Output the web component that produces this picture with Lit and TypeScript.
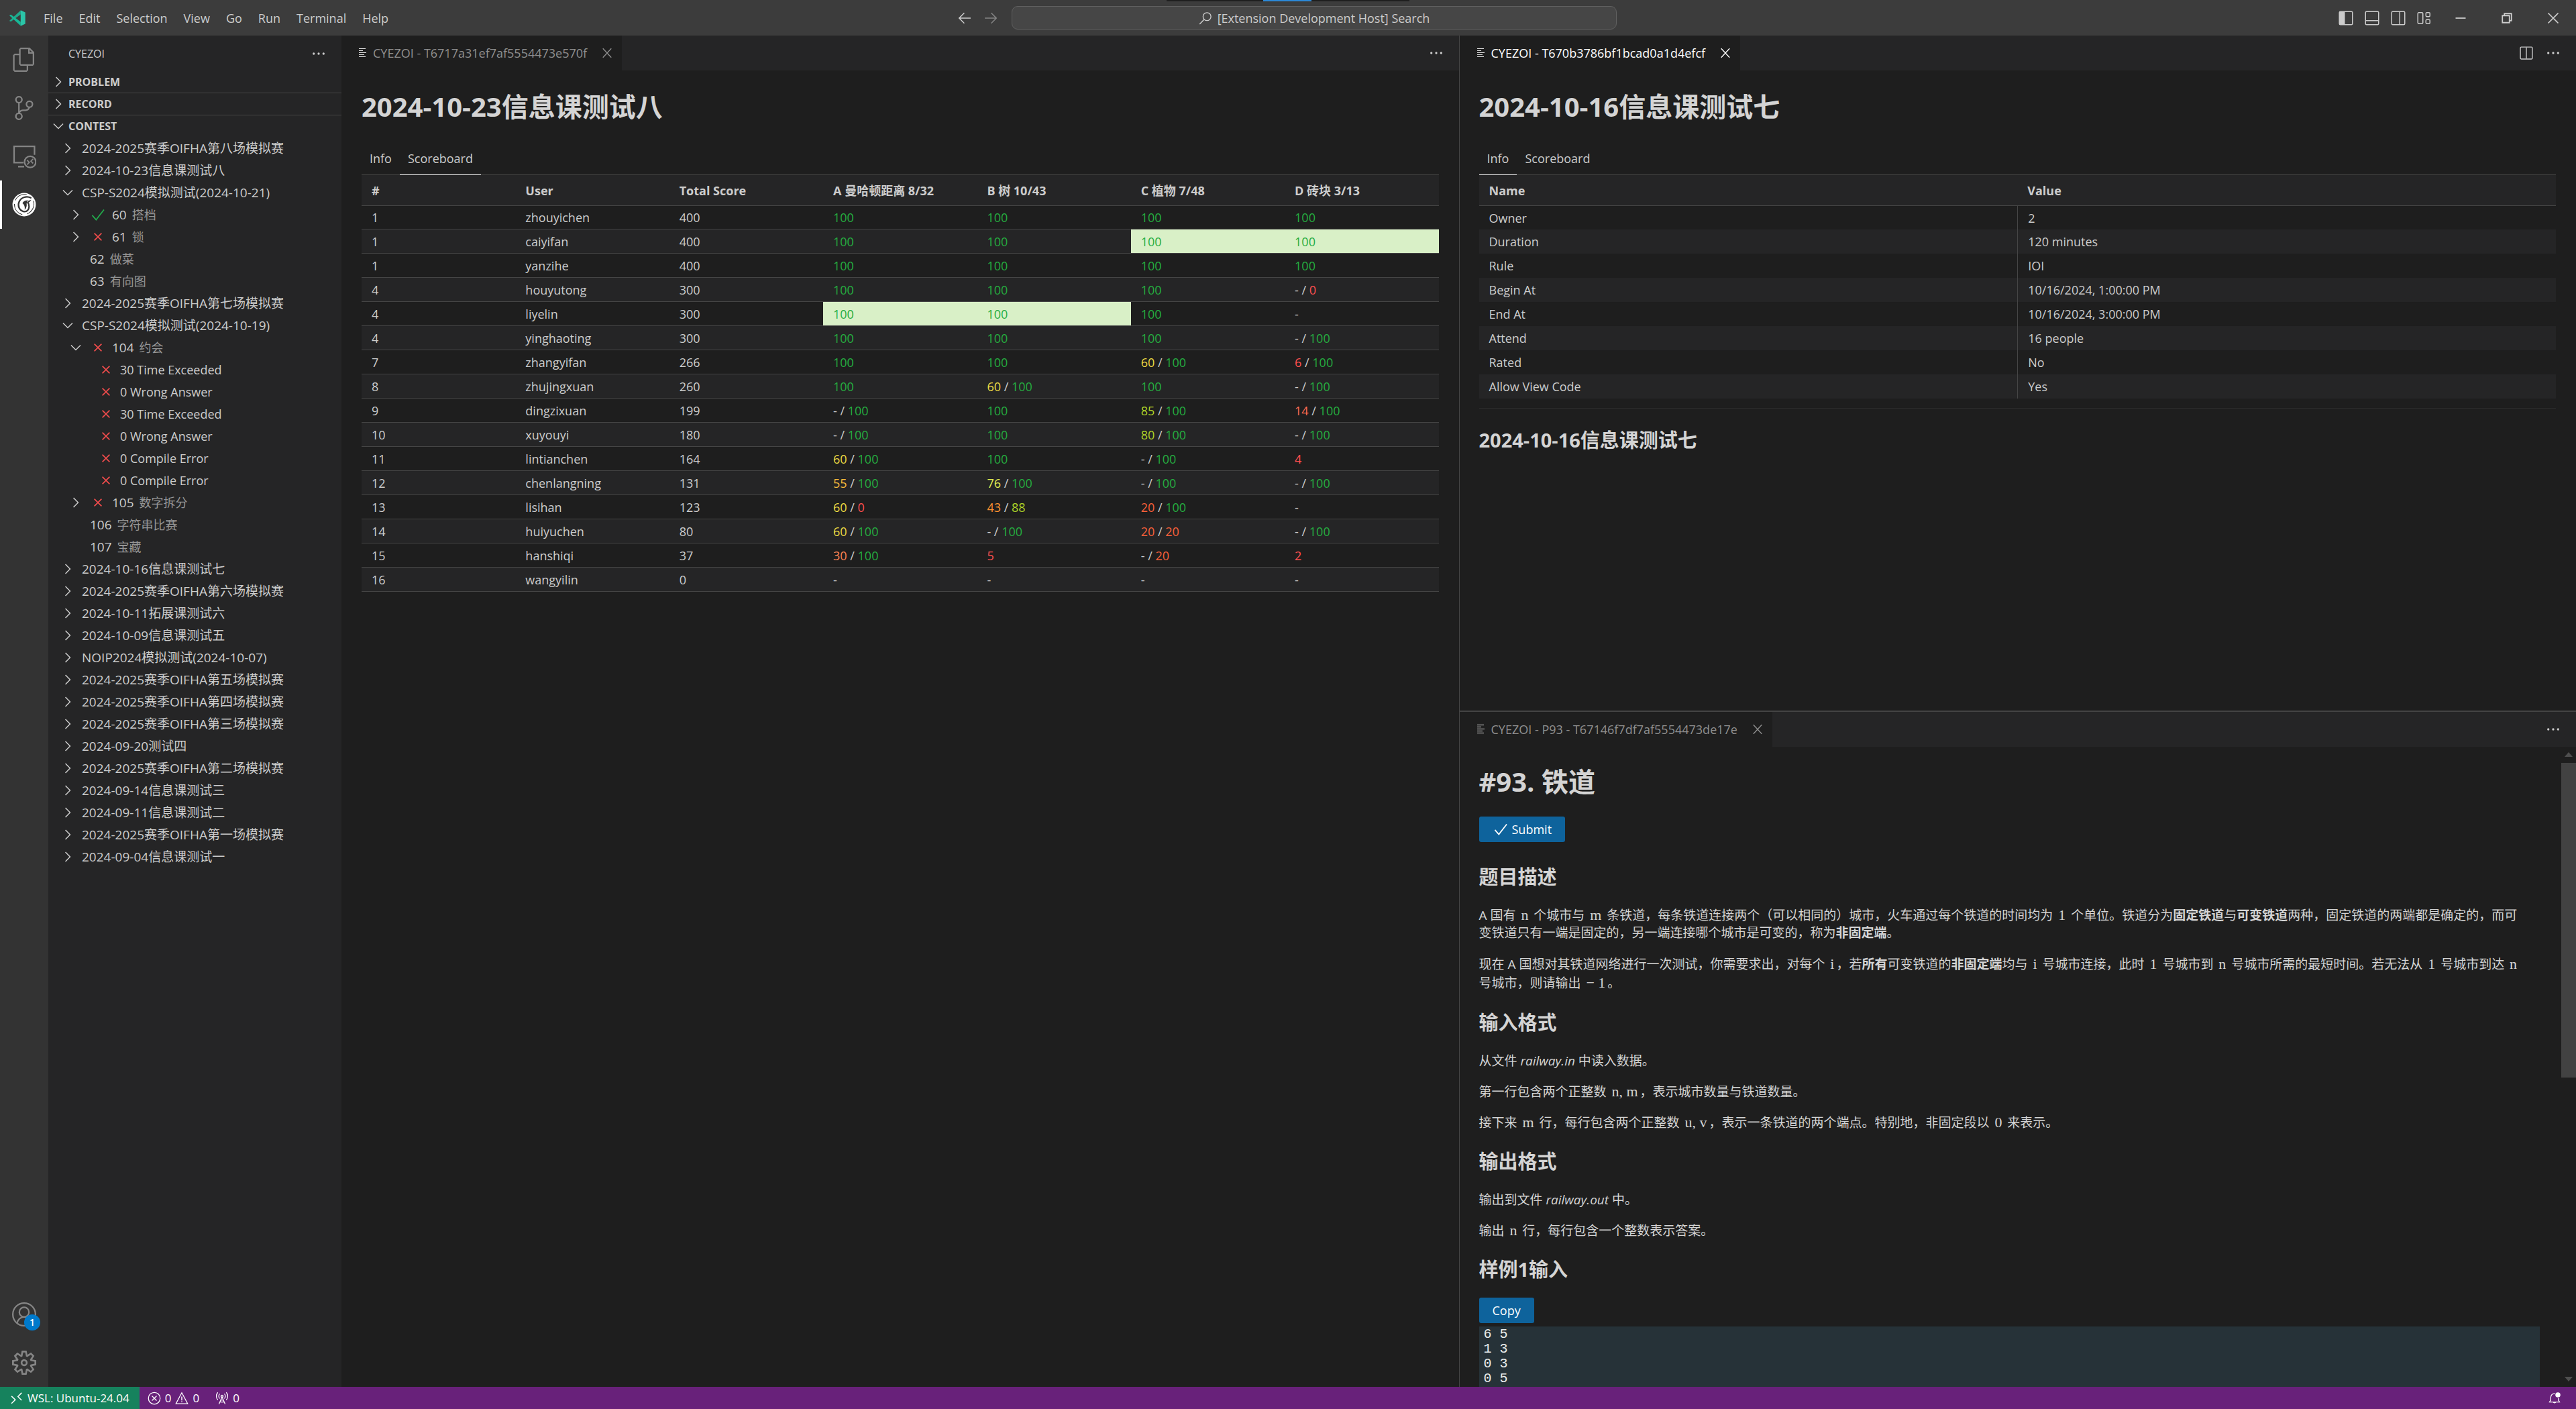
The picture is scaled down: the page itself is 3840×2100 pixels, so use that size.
import { LitElement, html, css, svg, nothing, type TemplateResult } from "lit";
import { customElement, state } from "lit/decorators.js";
import { classMap } from "lit/directives/class-map.js";

/* ---------- icons ---------- */

const icon = (body: unknown, box = 16, cls = "") =>
  html`<svg class="icon ${cls}" viewBox="0 0 ${box} ${box}" aria-hidden="true">${body}</svg>`;

const line = (d: string, w = 1) =>
  svg`<path d=${d} fill="none" stroke="currentColor" stroke-width=${w} />`;

const icons = {
  right: () => icon(line("M5.7 3.3 10.3 8l-4.6 4.7")),
  down: () => icon(line("M3.3 5.7 8 10.3l4.7-4.6")),
  check: () => icon(line("M2.3 8.6 6.2 13 14 3", 1.2)),
  cross: () => icon(line("M4.4 4.4l7.2 7.2M11.6 4.4l-7.2 7.2", 1.1)),
  close: () => icon(line("M3 2.6l10 10.8M13 2.6 3 13.4", 1.1)),
  more: () =>
    icon(svg`<g fill="currentColor"><circle cx="2.7" cy="8" r="1.2"/><circle cx="8" cy="8" r="1.2"/><circle cx="13.3" cy="8" r="1.2"/></g>`),
  page: () =>
    icon(svg`<path shape-rendering="crispEdges" d="M2 1.500h10M2 4.500h6M2 7.500h11M2 10.500h8M2 13.500h10" fill="none" stroke="currentColor" stroke-width="1"/>`),
  back: () => icon(line("M14.5 8H2.4M7.6 2.4 2 8l5.6 5.6", 1.1)),
  forward: () => icon(line("M1.5 8h12.1M8.4 2.4 14 8l-5.6 5.6", 1.1)),
  search: () =>
    icon(svg`<circle cx="9.8" cy="6.2" r="4.7" fill="none" stroke="currentColor" stroke-width="1.1"/>${line("M6.4 9.6 1 15.2", 1.2)}`),
  sideLeft: () =>
    icon(svg`<rect x="1.5" y="1.5" width="13" height="13" rx="1" fill="none" stroke="currentColor"/><path d="M2 2h5v12H2z" fill="currentColor"/>`),
  panel: () =>
    icon(svg`<rect x="1.5" y="1.5" width="13" height="13" rx="1" fill="none" stroke="currentColor"/>${line("M2 10.5h12")}`),
  sideRight: () =>
    icon(svg`<rect x="1.5" y="1.5" width="13" height="13" rx="1" fill="none" stroke="currentColor"/>${line("M9.5 2v12")}`),
  layout: () =>
    icon(svg`<g fill="none" stroke="currentColor"><rect x="1.5" y="2.5" width="5" height="11" rx="1"/><rect x="9.5" y="2.5" width="4" height="4" rx="1"/><rect x="9.5" y="9.5" width="4" height="4" rx="1"/></g>`),
  split: () =>
    icon(svg`<rect x="1.5" y="1.5" width="13" height="13" rx="1" fill="none" stroke="currentColor"/>${line("M8 2v12")}`),
  minimize: () => icon(line("M3 8h10", 1.2)),
  restore: () => icon(line("M3.5 5.5h7v7h-7zM5.5 5.5v-2h7v7h-2", 1.2)),
  winClose: () => icon(line("M3 3l10 10M13 3 3 13", 1.1)),
  files: () =>
    icon(svg`<path fill="currentColor" d="M17.5 0h-9L7 1.5V6H2.5L1 7.5v15.07L2.5 24h12.07L16 22.57V18h4.7l1.3-1.43V4.5L17.5 0zm0 2.12l2.38 2.38H17.5V2.12zm-3 20.38h-12v-15H7v9.07L8.5 18h6v4.5zm6-6h-12v-15H16V6h4.5v10.5z"/>`, 24, "big"),
  branch: () =>
    icon(svg`<path fill="currentColor" d="M21.007 8.222A3.738 3.738 0 0 0 15.045 5.2a3.737 3.737 0 0 0 1.156 6.583 2.988 2.988 0 0 1-2.668 1.67h-2.99a4.456 4.456 0 0 0-2.989 1.165V7.4a3.737 3.737 0 1 0-1.494 0v9.117a3.776 3.776 0 1 0 1.816.099 2.99 2.99 0 0 1 2.668-1.667h2.99a4.484 4.484 0 0 0 4.223-3.039 3.736 3.736 0 0 0 3.25-3.687zM4.565 3.738a2.242 2.242 0 1 1 4.484 0 2.242 2.242 0 0 1-4.484 0zm4.484 16.441a2.242 2.242 0 1 1-4.484 0 2.242 2.242 0 0 1 4.484 0zm8.221-9.715a2.242 2.242 0 1 1 0-4.485 2.242 2.242 0 0 1 0 4.485z"/>`, 24, "big"),
  remote: () =>
    icon(svg`${line("M11.500 18.200H2V2h20.300v8.500M6 22.200h6", 1.5)}<circle cx="18" cy="17.500" r="5.600" fill="none" stroke="currentColor" stroke-width="1.500"/>${line("M14.900 15.800l2.200 2.200-2.200 2.200M20.900 14.600l-2.200 2.200 2.200 2.200", 1.2)}`, 24, "big"),
  swirl: () =>
    icon(svg`<circle cx="12" cy="12" r="11.600" fill="currentColor"/><g fill="none" stroke="#333" stroke-linecap="round"><path stroke-width="1.500" d="M18.600 5.200C14.400 2.900 9 4.700 7 9.200c-1.700 4 .1 8.400 4.200 9.500 3.300.8 5.600-1.500 5.700-4.600.1-1.600-.3-2.900-1.100-3.900"/><path stroke-width=".700" d="M3.200 7.500C5.400 3.300 9.600 1.400 14.300 2M2.300 11.500c.1 5 3 8.900 7.600 10.300M21.400 8.500c1.300 5.200-1.200 10.300-6.200 12.600"/></g><path fill="#333" d="M10.300 10.700c.8-2.400 3.500-3.500 5.800-2.600l3.100-.9-1.800 2.100-3 1.500c.5 2.200-.1 4.700-1.900 6.300.4-2.500-.1-5-2.200-6.400z"/><circle cx="15.600" cy="9.100" r=".500" fill="currentColor"/>`, 24, "big"),
  account: () =>
    icon(svg`<g fill="none" stroke="currentColor"><circle cx="8" cy="8" r="7.500"/><circle cx="8" cy="6.500" r="3.200"/><path d="M3.400 13.700c.4-2.300 2.200-4 4.600-4s4.200 1.700 4.600 4"/></g>`, 16, "big"),
  gear: () =>
    icon(svg`<path fill="currentColor" d="M19.85 8.75l4.15.83v4.84l-4.15.83 2.35 3.52-3.43 3.43-3.52-2.35-.83 4.15H9.58l-.83-4.15-3.52 2.35-3.43-3.43 2.35-3.52L0 14.42V9.58l4.15-.83L1.8 5.23 5.23 1.8l3.52 2.35L9.58 0h4.84l.83 4.15 3.52-2.35 3.43 3.43-2.35 3.52zm-1.57 5.07l4-.81v-2l-4-.81-.54-1.3 2.29-3.43-1.43-1.43-3.43 2.29-1.3-.54-.81-4h-2l-.81 4-1.3.54-3.43-2.29-1.43 1.43L6.38 8.9l-.54 1.3-4 .81v2l4 .81.54 1.3-2.29 3.43 1.43 1.43 3.43-2.29 1.3.54.81 4h2l.81-4 1.3-.54 3.43 2.29 1.43-1.43-2.29-3.43.54-1.3zm-8.186-4.672A3.43 3.43 0 0 1 12 8.57 3.44 3.44 0 0 1 15.43 12a3.43 3.43 0 1 1-5.336-2.852zm.956 4.274c.281.188.612.288.95.288A1.7 1.7 0 0 0 13.71 12a1.71 1.71 0 1 0-2.66 1.422z"/>`, 24, "big"),
  wsl: () => icon(line("M1.700 5.500 6.200 9.800l-4.500 4.400M13.800 1.500 9.400 6l4.400 4.400", 1.2)),
  error: () =>
    icon(svg`<circle cx="8" cy="8" r="7" fill="none" stroke="currentColor"/>${line("M5.200 5.200l5.600 5.600M10.800 5.200l-5.600 5.600")}`),
  warning: () =>
    icon(svg`${line("M8 1.400 1 14.500h14z")}${line("M8 6v4.500M8 11.500v1.300", 1.2)}`),
  tower: () =>
    icon(svg`${line("M4.300 15 8 6.500 11.700 15M5.400 12.500h5.200M6.500 10h3")}<circle cx="8" cy="5.500" r="1.300" fill="none" stroke="currentColor"/>${line("M5.300 8.300a3.800 3.800 0 0 1 0-5.600M10.700 8.300a3.800 3.800 0 0 0 0-5.600M3 10a6.600 6.600 0 0 1 0-9M13 10a6.600 6.600 0 0 0 0-9")}`),
  bell: () =>
    icon(svg`${line("M8.500 2.500C5.500 2 3.500 4.300 3.500 7v3L2 12.500h12L12.500 10V8M6.500 12.500a1.600 1.600 0 0 0 3 0")}<circle cx="12" cy="4" r="3" fill="currentColor"/>`),
  logo: () => html`<svg class="logo" viewBox="0 0 24 24" aria-hidden="true">
    <path d="M0.400 15.600 16.800 0.600v5.900L2.200 17.300 0.400 16.600z" fill="#1fa88c" />
    <path d="M0.400 8.400 16.800 23.400v-5.900L2.200 6.700 0.400 7.400z" fill="#17b897" />
    <path d="M16.800 0.300 23.700 3.400v17.200l-6.900 3.100z" fill="#2bc5a8" />
  </svg>`,
};

/* ---------- data ---------- */

interface Node {
  level: 1 | 2 | 3;
  label: string;
  note?: string;
  open?: boolean;
  leaf?: boolean;
  mark?: "ok" | "bad";
}

const top = (label: string, open = false): Node => ({ level: 1, label, open });
const verdict = (label: string): Node => ({ level: 3, label, leaf: true, mark: "bad" });

const tree: Node[] = [
  top("2024-2025赛季OIFHA第八场模拟赛"),
  top("2024-10-23信息课测试八"),
  top("CSP-S2024模拟测试(2024-10-21)", true),
  { level: 2, label: "60", note: "搭档", mark: "ok" },
  { level: 2, label: "61", note: "锁", mark: "bad" },
  { level: 2, label: "62", note: "做菜", leaf: true },
  { level: 2, label: "63", note: "有向图", leaf: true },
  top("2024-2025赛季OIFHA第七场模拟赛"),
  top("CSP-S2024模拟测试(2024-10-19)", true),
  { level: 2, label: "104", note: "约会", mark: "bad", open: true },
  verdict("30 Time Exceeded"),
  verdict("0 Wrong Answer"),
  verdict("30 Time Exceeded"),
  verdict("0 Wrong Answer"),
  verdict("0 Compile Error"),
  verdict("0 Compile Error"),
  { level: 2, label: "105", note: "数字拆分", mark: "bad" },
  { level: 2, label: "106", note: "字符串比赛", leaf: true },
  { level: 2, label: "107", note: "宝藏", leaf: true },
  top("2024-10-16信息课测试七"),
  top("2024-2025赛季OIFHA第六场模拟赛"),
  top("2024-10-11拓展课测试六"),
  top("2024-10-09信息课测试五"),
  top("NOIP2024模拟测试(2024-10-07)"),
  top("2024-2025赛季OIFHA第五场模拟赛"),
  top("2024-2025赛季OIFHA第四场模拟赛"),
  top("2024-2025赛季OIFHA第三场模拟赛"),
  top("2024-09-20测试四"),
  top("2024-2025赛季OIFHA第二场模拟赛"),
  top("2024-09-14信息课测试三"),
  top("2024-09-11信息课测试二"),
  top("2024-2025赛季OIFHA第一场模拟赛"),
  top("2024-09-04信息课测试一"),
];

/* rank, user, total, then one cell per problem; a leading "*" marks the first accepted answer */
const board: string[][] = [
  ["1", "zhouyichen", "400", "100", "100", "100", "100"],
  ["1", "caiyifan", "400", "100", "100", "*100", "*100"],
  ["1", "yanzihe", "400", "100", "100", "100", "100"],
  ["4", "houyutong", "300", "100", "100", "100", "- / 0"],
  ["4", "liyelin", "300", "*100", "*100", "100", "-"],
  ["4", "yinghaoting", "300", "100", "100", "100", "- / 100"],
  ["7", "zhangyifan", "266", "100", "100", "60 / 100", "6 / 100"],
  ["8", "zhujingxuan", "260", "100", "60 / 100", "100", "- / 100"],
  ["9", "dingzixuan", "199", "- / 100", "100", "85 / 100", "14 / 100"],
  ["10", "xuyouyi", "180", "- / 100", "100", "80 / 100", "- / 100"],
  ["11", "lintianchen", "164", "60 / 100", "100", "- / 100", "4"],
  ["12", "chenlangning", "131", "55 / 100", "76 / 100", "- / 100", "- / 100"],
  ["13", "lisihan", "123", "60 / 0", "43 / 88", "20 / 100", "-"],
  ["14", "huiyuchen", "80", "60 / 100", "- / 100", "20 / 20", "- / 100"],
  ["15", "hanshiqi", "37", "30 / 100", "5", "- / 20", "2"],
  ["16", "wangyilin", "0", "-", "-", "-", "-"],
];

const details: [string, string][] = [
  ["Owner", "2"],
  ["Duration", "120 minutes"],
  ["Rule", "IOI"],
  ["Begin At", "10/16/2024, 1:00:00 PM"],
  ["End At", "10/16/2024, 3:00:00 PM"],
  ["Attend", "16 people"],
  ["Rated", "No"],
  ["Allow View Code", "Yes"],
];

const scoreText = (value: string) =>
  value
    .replace("*", "")
    .split(" / ")
    .map((part, i) => {
      const shown = part === "-" ? "-" : html`<span class="s${Math.floor(Number(part) / 10)}">${part}</span>`;
      return i ? html` / ${shown}` : shown;
    });

const m = (text: string) => html`<span class="math">${text}</span>`;

@customElement("app-root")
export class AppRoot extends LitElement {
  @state() private sections = { PROBLEM: false, RECORD: false, CONTEST: true };

  static styles = css`
    :host {
      display: grid;
      grid-template-rows: 53px minmax(0, 1fr) 33px;
      height: 100vh;
      overflow: hidden;
      background: #1e1e1e;
      color: #cccccc;
      font: 18px/26px "Open Sans", "Noto Sans CJK SC", sans-serif;
    }
    * { box-sizing: border-box; }
    button {
      display: flex;
      align-items: center;
      margin: 0;
      padding: 0;
      border: 0;
      background: none;
      color: inherit;
      font: inherit;
      text-align: left;
      white-space: nowrap;
    }
    .icon { display: block; flex: none; width: 24px; height: 24px; }
    .icon.big { width: 36px; height: 36px; }

    /* title bar */
    .title {
      position: relative;
      display: grid;
      grid-template-columns: 1fr auto 1fr;
      align-items: center;
      background: #3c3c3c;
    }
    .menus { display: flex; align-items: center; padding-left: 14px; }
    .logo { width: 24px; height: 24px; margin-right: 15px; }
    .menus button { padding: 0 12px; }
    .centre { display: flex; align-items: center; padding-right: 12px; }
    .centre .nav { width: 39px; justify-content: center; }
    .nav .icon { width: 22px; height: 22px; }
    .nav.off { opacity: 0.5; }
    .command {
      justify-content: center;
      gap: 8px;
      width: 902px;
      height: 35px;
      margin-left: 12px;
      border: 1px solid #606060;
      border-radius: 9px;
      background: #464646;
    }
    .command .icon { width: 20px; height: 20px; }
    .window { display: flex; justify-content: flex-end; align-items: center; }
    .window .tool { width: 39px; justify-content: center; }
    .window .sys { width: 69px; justify-content: center; }
    .grip {
      position: absolute;
      top: 0;
      left: calc(50% - 181px);
      width: 362px;
      height: 2px;
      background: linear-gradient(90deg, #1f1f1f 0 144px, #2b88d8 144px 216px, #1f1f1f 216px);
    }

    /* body */
    .body { display: grid; grid-template-columns: 72px 437px minmax(0, 1fr) minmax(0, 1fr); min-height: 0; }
    .activity { display: flex; flex-direction: column; background: #333333; color: #858585; }
    .activity button { justify-content: center; height: 72px; border-left: 3px solid transparent; padding-right: 3px; }
    .activity .current { border-left-color: #ffffff; color: #ffffff; }
    .activity .low { margin-top: auto; }
    .badged { position: relative; }
    .badge {
      position: absolute;
      left: 33px;
      top: 36px;
      width: 24px;
      height: 24px;
      border-radius: 12px;
      background: #007acc;
      color: #ffffff;
      font-size: 14px;
      font-weight: 600;
      line-height: 24px;
      text-align: center;
    }

    .side { display: flex; flex-direction: column; background: #252526; min-width: 0; overflow: hidden; }
    .side-head { display: flex; align-items: center; justify-content: space-between; height: 53px; padding: 0 23px 0 30px; }
    .side-head h2 { margin: 0; font-size: 16px; font-weight: 400; line-height: 26px; }
    .more .icon { width: 22px; height: 22px; }
    .section { width: 100%; height: 33px; padding-left: 3px; gap: 3px; border-bottom: 1px solid #454545; font-size: 16px; font-weight: 700; }
    .section.open { height: 32px; border-bottom: 0; }
    .tree { margin: 0; padding: 0; list-style: none; }
    .node { width: 100%; height: 33px; padding-left: 17px; font-size: 19px; }
    .node.l2 { padding-left: 29px; }
    .node.l3 { padding-left: 41px; font-size: 18px; }
    .twist { width: 24px; margin-right: 9px; }
    .mark { margin-right: 9px; }
    .mark.ok { color: #23a94b; }
    .mark.bad { color: #f14c4c; }
    .note { margin-left: 8px; font-size: 18px; color: #969696; }

    /* editor groups */
    .group { display: flex; flex-direction: column; min-width: 0; min-height: 0; overflow: hidden; }
    .right { display: grid; grid-template-rows: calc(50% - 1px) minmax(0, 1fr); border-left: 1px solid #444444; min-height: 0; }
    .lower { border-top: 2px solid #444444; }
    .strip { display: flex; flex: none; align-items: center; height: 52px; background: #252526; }
    .file { display: flex; align-items: center; height: 52px; padding: 0 12px 0 24px; background: #1e1e1e; color: #8f8f8f; }
    .file.focus { color: #ffffff; }
    .file a { display: flex; align-items: center; gap: 7px; color: inherit; text-decoration: none; }
    .file a .icon { width: 16px; height: 16px; color: #e0e0e0; }
    .file .icon { width: 20px; height: 20px; }
    .file button { margin-left: 20px; }
    .actions { display: flex; gap: 18px; margin-left: auto; padding-right: 23px; }
    .actions .icon { width: 22px; height: 22px; }

    .page { flex: 1; min-width: 0; padding: 28px 30px 0; overflow: hidden; }
    .right .page { padding-left: 29px; }
    .scroller .page { padding-top: 26px; padding-right: 32px; }
    h1 { margin: 0 0 23px; font-size: 40px; line-height: 52px; color: #d4d4d4; }
    .scroller h1 { margin-bottom: 26px; }
    .page h2 { margin: 25px 0; font-size: 29px; line-height: 39px; color: #d4d4d4; }
    .tabs { display: flex; border-bottom: 1px solid #454545; }
    .tabs button { margin-bottom: -1px; padding: 15px 12px 11px; border-bottom: 1px solid transparent; }
    .tabs .on { border-bottom-color: #ffffff; }

    table { width: 100%; border-spacing: 0; table-layout: fixed; text-align: left; }
    th { height: 46px; padding: 0 15px; background: #252526; border-bottom: 1px solid #454545; font-weight: 700; white-space: nowrap; }
    td { height: 36px; padding: 0 15px; }
    tbody tr:first-child td { height: 35px; }
    tbody tr:nth-child(even) { background: #252526; }
    .board td { border-bottom: 1px solid #454545; }
    .board td.first { background: #d9f0c7; }
    .info td + td { border-left: 1px solid #454545; }
    .s0 { color: #ff4f4f; }
    .s1 { color: #ff694f; }
    .s2 { color: #f8603a; }
    .s3 { color: #fc8354; }
    .s4 { color: #fa9231; }
    .s5 { color: #f7bb3b; }
    .s6 { color: #ecdb44; }
    .s7 { color: #e2ec52; }
    .s8 { color: #b0d628; }
    .s10 { color: #25ad40; }
    hr { margin: 14px 0 27px; border: 0; border-top: 1px solid #2c2c2c; }

    .scroller { display: flex; flex: 1; min-height: 0; }
    .bar { display: flex; flex-direction: column; align-items: center; width: 22px; padding: 8px 0 8px; }
    .bar .thumb { width: 22px; height: 50%; margin: 9px 0 auto; background: #424242; }
    .bar i { width: 0; border: 6px solid transparent; border-top: 0; border-bottom: 7px solid #4f4f4f; }
    .bar i.dn { border-bottom: 0; border-top: 7px solid #4f4f4f; }
    .primary { height: 38px; padding: 0 20px; gap: 5px; border-radius: 3px; background: #0e639c; color: #ffffff; }
    .statement { font-size: 19px; color: #d4d4d4; }
    .statement p { margin: 0 0 20px; white-space: nowrap; }
    .statement p.tall { line-height: 28px; }
    .primary + .statement h2:first-child { margin-top: 32px; }
    .statement h2:last-child { margin-bottom: 23px; }
    .math { margin: 0 3px; font-family: "Liberation Serif", serif; font-size: 22px; line-height: 20px; }
    pre {
      margin: 5px 0 0;
      padding: 1px 7px;
      background: #263238;
      color: #e9eded;
      font: 20px/22px "Liberation Mono", monospace;
    }

    /* status bar */
    .status { display: flex; background: #68217a; color: #ffffff; font-size: 17px; }
    .status .icon { width: 20px; height: 20px; }
    .status button { gap: 6px; padding: 0 12px; }
    .status .host { padding: 0 15px; background: #16825d; }
    .status .end { margin-left: auto; padding-right: 22px; }
  `;

  private toggle(name: keyof AppRoot["sections"]) {
    this.sections = { ...this.sections, [name]: !this.sections[name] };
  }

  private node(n: Node) {
    return html`<li>
      <button class="node l${n.level}">
        <span class="twist">${n.leaf ? nothing : n.open ? icons.down() : icons.right()}</span>
        ${n.mark ? html`<span class="mark ${n.mark}">${n.mark === "ok" ? icons.check() : icons.cross()}</span>` : nothing}
        <span>${n.label}</span>${n.note ? html`<span class="note">${n.note}</span>` : nothing}
      </button>
    </li>`;
  }

  private section(name: keyof AppRoot["sections"]) {
    const open = this.sections[name];
    return html`<button class=${classMap({ section: true, open })} aria-expanded=${String(open)} @click=${() => this.toggle(name)}>
      ${open ? icons.down() : icons.right()}${name}
    </button>`;
  }

  private strip(name: string, focus: boolean, split = false) {
    return html`<div class="strip">
      <div class=${classMap({ file: true, focus })}>
        <a href="#editor">${icons.page()}${name}</a>
        <button aria-label="Close">${icons.close()}</button>
      </div>
      <div class="actions">
        ${split ? html`<button aria-label="Split editor">${icons.split()}</button>` : nothing}
        <button aria-label="More actions">${icons.more()}</button>
      </div>
    </div>`;
  }

  private tabs(active: string) {
    return html`<div class="tabs" role="tablist">
      ${["Info", "Scoreboard"].map(
        (t) => html`<button role="tab" aria-selected=${String(t === active)} class=${classMap({ on: t === active })}>${t}</button>`,
      )}
    </div>`;
  }

  private titleBar() {
    const tools: [string, () => TemplateResult][] = [
      ["Primary side bar", icons.sideLeft],
      ["Panel", icons.panel],
      ["Secondary side bar", icons.sideRight],
      ["Layout", icons.layout],
    ];
    return html`<header class="title">
      <nav class="menus">
        ${icons.logo()}
        ${["File", "Edit", "Selection", "View", "Go", "Run", "Terminal", "Help"].map((t) => html`<button>${t}</button>`)}
      </nav>
      <div class="centre">
        <button class="nav" aria-label="Back">${icons.back()}</button>
        <button class="nav off" aria-label="Forward">${icons.forward()}</button>
        <button class="command">${icons.search()}[Extension Development Host] Search</button>
      </div>
      <div class="window">
        ${tools.map(([label, draw]) => html`<button class="tool" aria-label=${label}>${draw()}</button>`)}
        <button class="sys" aria-label="Minimize">${icons.minimize()}</button>
        <button class="sys" aria-label="Restore">${icons.restore()}</button>
        <button class="sys" aria-label="Close window">${icons.winClose()}</button>
      </div>
      <div class="grip"></div>
    </header>`;
  }

  private problem() {
    return html`<div class="scroller">
      <article class="page">
        <h1>#93. 铁道</h1>
        <button class="primary">${icons.check()}Submit</button>
        <div class="statement">
          <h2>题目描述</h2>
          <p>
            A 国有 ${m("n")} 个城市与 ${m("m")} 条铁道，每条铁道连接两个（可以相同的）城市，火车通过每个铁道的时间均为 ${m("1")} 个单位。铁道分为<b>固定铁道</b>与<b>可变铁道</b>两种，固定铁道的两端都是确定的，而可<br />变铁道只有一端是固定的，另一端连接哪个城市是可变的，称为<b>非固定端</b>。
          </p>
          <p class="tall">
            现在 A 国想对其铁道网络进行一次测试，你需要求出，对每个 ${m("i")}，若<b>所有</b>可变铁道的<b>非固定端</b>均与 ${m("i")} 号城市连接，此时 ${m("1")} 号城市到 ${m("n")} 号城市所需的最短时间。若无法从 ${m("1")} 号城市到达 ${m("n")}<br />号城市，则请输出 ${m("− 1")}。
          </p>
          <h2>输入格式</h2>
          <p>从文件 <em>railway.in</em> 中读入数据。</p>
          <p>第一行包含两个正整数 ${m("n, m")}，表示城市数量与铁道数量。</p>
          <p>接下来 ${m("m")} 行，每行包含两个正整数 ${m("u, v")}，表示一条铁道的两个端点。特别地，非固定段以 ${m("0")} 来表示。</p>
          <h2>输出格式</h2>
          <p>输出到文件 <em>railway.out</em> 中。</p>
          <p>输出 ${m("n")} 行，每行包含一个整数表示答案。</p>
          <h2>样例1输入</h2>
        </div>
        <button class="primary">Copy</button>
        <pre>6 5
1 3
0 3
0 5</pre>
      </article>
      <div class="bar"><i></i><div class="thumb"></div><i class="dn"></i></div>
    </div>`;
  }

  render() {
    return html`
      ${this.titleBar()}
      <div class="body">
        <nav class="activity">
          <button aria-label="Explorer">${icons.files()}</button>
          <button aria-label="Source control">${icons.branch()}</button>
          <button aria-label="Remote explorer">${icons.remote()}</button>
          <button class="current" aria-label="CYEZOI">${icons.swirl()}</button>
          <button class="low badged" aria-label="Accounts">${icons.account()}<span class="badge">1</span></button>
          <button aria-label="Manage">${icons.gear()}</button>
        </nav>
        <aside class="side">
          <div class="side-head">
            <h2>CYEZOI</h2>
            <button class="more" aria-label="More actions">${icons.more()}</button>
          </div>
          ${this.section("PROBLEM")} ${this.section("RECORD")} ${this.section("CONTEST")}
          ${this.sections.CONTEST ? html`<ul class="tree">${tree.map((n) => this.node(n))}</ul>` : nothing}
        </aside>
        <main class="group">
          ${this.strip("CYEZOI - T6717a31ef7af5554473e570f", false)}
          <div class="page">
            <h1>2024-10-23信息课测试八</h1>
            ${this.tabs("Scoreboard")}
            <table class="board">
              <thead>
                <tr>
                  ${["#", "User", "Total Score", "A 曼哈顿距离 8/32", "B 树 10/43", "C 植物 7/48", "D 砖块 3/13"].map((t) => html`<th>${t}</th>`)}
                </tr>
              </thead>
              <tbody>
                ${board.map(
                  (row) => html`<tr>
                    ${row.map((v, i) => (i < 3 ? html`<td>${v}</td>` : html`<td class=${classMap({ first: v[0] === "*" })}>${scoreText(v)}</td>`))}
                  </tr>`,
                )}
              </tbody>
            </table>
          </div>
        </main>
        <div class="right">
          <section class="group">
            ${this.strip("CYEZOI - T670b3786bf1bcad0a1d4efcf", true, true)}
            <div class="page">
              <h1>2024-10-16信息课测试七</h1>
              ${this.tabs("Info")}
              <table class="info">
                <thead><tr><th>Name</th><th>Value</th></tr></thead>
                <tbody>${details.map(([k, v]) => html`<tr><td>${k}</td><td>${v}</td></tr>`)}</tbody>
              </table>
              <hr />
              <h2>2024-10-16信息课测试七</h2>
            </div>
          </section>
          <section class="group lower">
            ${this.strip("CYEZOI - P93 - T67146f7df7af5554473de17e", false)} ${this.problem()}
          </section>
        </div>
      </div>
      <footer class="status">
        <button class="host">${icons.wsl()}WSL: Ubuntu-24.04</button>
        <button>${icons.error()}0${icons.warning()}0</button>
        <button>${icons.tower()}0</button>
        <button class="end" aria-label="Notifications">${icons.bell()}</button>
      </footer>
    `;
  }
}
